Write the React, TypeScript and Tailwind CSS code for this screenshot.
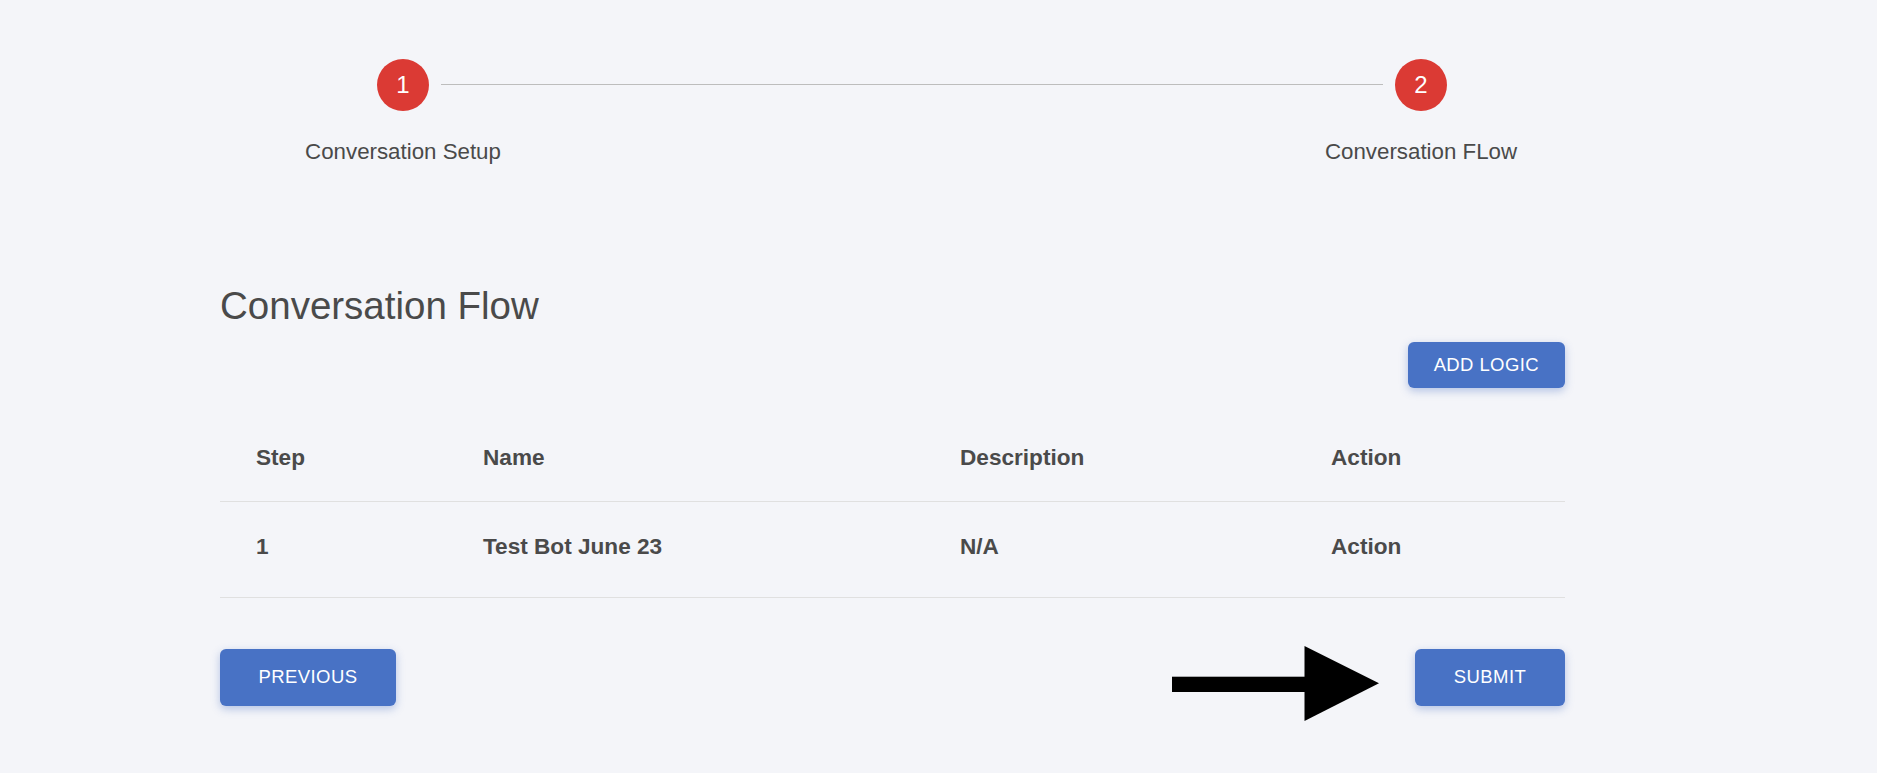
import React from "react";

const btn =
  "bg-[#4872c5] text-white rounded-[6px] shadow-[0_3px_8px_rgba(60,100,190,0.35)] tracking-[0.4px] text-[18.5px] leading-none flex items-center justify-center";

export default function App() {
  return (
    <div className="min-h-screen bg-[#f4f5f9] font-['Liberation_Sans',Arial,sans-serif] text-[#4a4a4a]">
      <div className="pl-[220px] pt-[59px] w-[1565px] pb-[40px]">
        {/* Stepper */}
        <div className="ml-[157px] w-[1070px]">
          <div className="flex items-center">
            <div className="w-[52px] h-[52px] rounded-full bg-[#db3a34] text-white text-[24px] leading-none flex items-center justify-center">
              1
            </div>
            <div className="flex-1 h-px bg-[#bdbdbd] mx-[12px] mt-[-1px]" />
            <div className="w-[52px] h-[52px] rounded-full bg-[#db3a34] text-white text-[24px] leading-none flex items-center justify-center">
              2
            </div>
          </div>
          <div className="flex justify-between mt-[28px] text-[22.3px] leading-[26px]">
            <div className="w-[52px] flex justify-center whitespace-nowrap">Conversation Setup</div>
            <div className="w-[52px] flex justify-center whitespace-nowrap">Conversation FLow</div>
          </div>
        </div>

        {/* Heading */}
        <h1 className="mt-[118px] text-[38.5px] leading-[46px] font-normal">Conversation Flow</h1>

        <div className="flex justify-end mt-[13px]">
          <button className={btn + " h-[46px] px-[26px]"}>ADD LOGIC</button>
        </div>

        {/* Table */}
        <div className="mt-[25px] text-[22.6px] leading-[26px] font-bold">
          <div className="grid grid-cols-[227px_477px_371px_270px] border-b border-[#e0e0e0]">
            <div className="pl-[36px] pt-[32px] pb-[30px]">Step</div>
            <div className="pl-[36px] pt-[32px] pb-[30px]">Name</div>
            <div className="pl-[36px] pt-[32px] pb-[30px]">Description</div>
            <div className="pl-[36px] pt-[32px] pb-[30px]">Action</div>
          </div>
          <div className="grid grid-cols-[227px_477px_371px_270px] border-b border-[#e0e0e0]">
            <div className="pl-[36px] pt-[32px] pb-[37px]">1</div>
            <div className="pl-[36px] pt-[32px] pb-[37px]">Test Bot June 23</div>
            <div className="pl-[36px] pt-[32px] pb-[37px]">N/A</div>
            <div className="pl-[36px] pt-[32px] pb-[37px]">Action</div>
          </div>
        </div>

        {/* Bottom actions */}
        <div className="flex justify-between items-start mt-[51px]">
          <button className={btn + " h-[57px] w-[176px]"}>PREVIOUS</button>
          <div className="flex items-start gap-[36px]">
            <svg width="207" height="75" viewBox="0 0 207 75" className="mt-[-3px]">
              <rect x="0" y="30.7" width="134" height="15.3" fill="#000" />
              <polygon points="132.5,0 207,37.3 132.5,75" fill="#000" />
            </svg>
            <button className={btn + " h-[57px] w-[150px]"}>SUBMIT</button>
          </div>
        </div>
      </div>
    </div>
  );
}
